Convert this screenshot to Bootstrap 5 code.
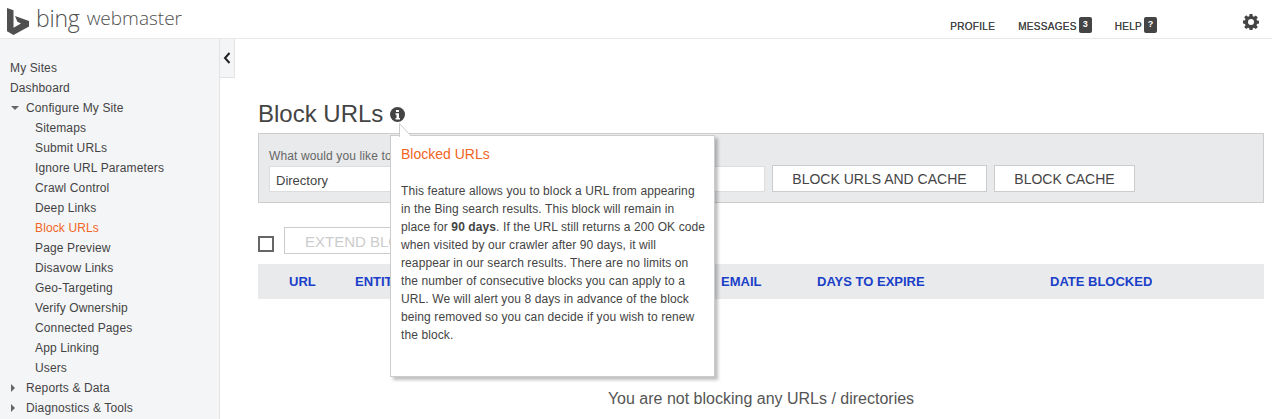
<!DOCTYPE html>
<html lang="en">
<head>
  <meta charset="UTF-8">
  <meta name="viewport" content="width=device-width, initial-scale=1.0">
  <title>Block URLs - Bing Webmaster</title>
  <link rel="stylesheet" href="https://cdn.jsdelivr.net/npm/bootstrap@5.3.0/dist/css/bootstrap.min.css">
  <style>
    html, body { height: 419px; overflow: hidden; }
    body { font-family: "Liberation Sans", Arial, sans-serif; font-size: 12px; color: #444; background: #fff; }
    .top-bar { height: 39px; border-bottom: 1px solid #e8e8e8; padding-left: 7px; }
    .logo-word { font-size: 23px; font-weight: 300; line-height: 36px; color: #505050; margin-left: 7px; font-family: "Open Sans", sans-serif; letter-spacing: -.2px; }
    .logo-word2 { font-size: 19px; font-weight: 300; line-height: 36px; color: #505050; margin-left: 7px; font-family: "Open Sans", sans-serif; }
    .top-links { margin-left: auto; padding-right: 13px; height: 38px; gap: 23px; }
    .top-link { font-size: 10px; color: #444; letter-spacing: .3px; margin-top: 17px; line-height: 20px; text-shadow: 0 0 .4px #444; }
    .count-tag { display: inline-block; width: 13px; height: 16px; background: #444; color: #fff; border-radius: 2px; font-size: 9px; font-weight: 700; line-height: 15px; text-align: center; letter-spacing: 0; margin-left: 2px; vertical-align: 3px; }
    .gear-icon { margin-left: 63px; margin-top: 14px; }
    .side-nav { width: 220px; height: 380px; background: #f4f5f7; border-right: 1px solid #e3e3e3; padding-top: 19px; flex: none; letter-spacing: .13px; }
    .side-nav div { line-height: 20px; height: 20px; padding-left: 10px; color: #444; white-space: nowrap; }
    .side-nav .grp { padding-left: 10px; display: flex; align-items: center; }
    .side-nav .sub { padding-left: 35px; }
    .side-nav .sub.on { color: #f26522; }
    .caret-down { width: 0; height: 0; border: 4px solid transparent; border-top: 4px solid #666; border-bottom: 0; margin-right: 7px; margin-left: 1px; }
    .caret-right { width: 0; height: 0; border: 4px solid transparent; border-left: 4px solid #666; border-right: 0; margin-right: 11px; margin-left: 1px; }
    .side-toggle { width: 15px; height: 39px; background: #f4f5f7; border-right: 1px solid #e3e3e3; border-bottom: 1px solid #e3e3e3; flex: none; }
    .content-area { flex: 1; padding: 61px 8px 0 23px; position: relative; min-width: 0; }
    .page-title { font-size: 24px; font-weight: 400; line-height: 28px; margin: 0 0 5px; color: #444; }
    .info-icon { margin-left: 7px; }
    .search-box { background: #e9eaec; border: 1px solid #ccc; height: 70px; padding: 14px 10px 0; }
    .search-box label { display: block; color: #666; line-height: 16px; margin-bottom: 1px; letter-spacing: .12px; }
    .input-line { gap: 7px; }
    .path-input { width: 496px; height: 26px; background: #fff; border: 1px solid #ddd; padding-left: 6px; line-height: 27px; font-size: 13px; color: #444; margin-top: 1px; }
    .plain-btn { background: #fff; border: 1px solid #ccc; border-radius: 0; height: 27px; font-size: 14px; color: #444; padding: 1px 0 0; line-height: 25px; text-align: center; }
    .btn-wide { width: 215px; }
    .btn-short { width: 141px; }
    .tick-row { margin-top: 24px; height: 27px; }
    .tick-box { width: 16px; height: 16px; border: 2px solid #666; background: #fff; margin-top: 9px; }
    .extend-btn { color: #ccc; border-color: #ccc; width: 250px; text-align: left; margin-left: 10px; font-size: 15px; padding-left: 20px; }
    .head-row { margin-top: 10px; height: 35px; background: #e9eaec; color: #1a3fc8; font-size: 13px; font-weight: 700; line-height: 35px; }
    .head-row span { flex: none; white-space: nowrap; overflow: hidden; }
    .empty-note { font-size: 16px; text-align: center; color: #555; margin-top: 90px; line-height: 20px; }
    .help-pop { position: absolute; left: 155px; top: 96px; width: 325px; height: 242px; background: #fff; border: 1px solid #ccc; box-shadow: 3px 3px 3px rgba(0,0,0,.25); padding: 9px 0 9px 10px; line-height: 18px; color: #444; letter-spacing: .1px; white-space: nowrap; }
    .help-pop h3 { font-size: 14px; font-weight: 400; color: #f26522; line-height: 18px; margin: 0 0 19px; letter-spacing: 0; }
    .help-pop p { margin: 0; }
    .pop-arrow { position: absolute; left: 8px; top: -13px; display: block; }
  </style>
</head>
<body>
  <header class="top-bar d-flex">
    <svg width="22" height="27" viewBox="0 0 22 27" class="mt-2 flex-none"><path d="M0 0l6.500 2.300v17.500l7.500-4.400-3.600-1.700-2.400-5.600L22 13v5.500L6.500 27 0 23.300z" fill="#505050"/></svg>
    <span class="logo-word">bing</span><span class="logo-word2">webmaster</span>
    <div class="top-links d-flex">
      <div class="top-link">PROFILE</div>
      <div class="top-link">MESSAGES<span class="count-tag">3</span></div>
      <div class="top-link">HELP<span class="count-tag">?</span></div>
      <svg class="gear-icon" width="16" height="16" viewBox="0 0 16 16"><path fill="#444" fill-rule="evenodd" d="M6.600 0h2.800l.4 2.200 1.200.5 1.800-1.300 2 2-1.300 1.800.5 1.200 2 .4v2.800l-2 .4-.5 1.200 1.300 1.800-2 2-1.800-1.300-1.200.5-.4 2.200H6.600l-.4-2.200-1.200-.5-1.800 1.300-2-2 1.300-1.800-.5-1.200-2-.4V6.600l2-.4.5-1.200-1.300-1.800 2-2L5 2.700l1.200-.5zM8 5a3 3 0 100 6 3 3 0 000-6z"/></svg>
    </div>
  </header>
  <div class="d-flex">
    <nav class="side-nav">
      <div>My Sites</div>
      <div>Dashboard</div>
      <div class="grp"><i class="caret-down"></i>Configure My Site</div>
      <div class="sub">Sitemaps</div>
      <div class="sub">Submit URLs</div>
      <div class="sub">Ignore URL Parameters</div>
      <div class="sub">Crawl Control</div>
      <div class="sub">Deep Links</div>
      <div class="sub on">Block URLs</div>
      <div class="sub">Page Preview</div>
      <div class="sub">Disavow Links</div>
      <div class="sub">Geo-Targeting</div>
      <div class="sub">Verify Ownership</div>
      <div class="sub">Connected Pages</div>
      <div class="sub">App Linking</div>
      <div class="sub">Users</div>
      <div class="grp"><i class="caret-right"></i>Reports &amp; Data</div>
      <div class="grp"><i class="caret-right"></i>Diagnostics &amp; Tools</div>
    </nav>
    <div class="side-toggle d-flex align-items-center justify-content-center">
      <svg width="8" height="12" viewBox="0 0 8 12"><path d="M6.500 1L2 6l4.500 5" fill="none" stroke="#222" stroke-width="2"/></svg>
    </div>
    <main class="content-area">
      <h1 class="page-title d-flex align-items-center">Block URLs
        <svg class="info-icon" width="15" height="15" viewBox="0 0 15 15"><circle cx="7.500" cy="7.500" r="7.500" fill="#444"/><path fill="#fff" d="M6 3h3v2H6zM5.500 6.200H9v4.800h1v1.500H5.500V11h1V7.700h-1z"/></svg>
      </h1>
      <section class="search-box">
        <label>What would you like to block?</label>
        <div class="input-line d-flex align-items-start">
          <div class="path-input">Directory</div>
          <button class="plain-btn btn-wide" type="button">BLOCK URLS AND CACHE</button>
          <button class="plain-btn btn-short" type="button">BLOCK CACHE</button>
        </div>
      </section>
      <div class="tick-row d-flex">
        <div class="tick-box"></div>
        <button class="plain-btn extend-btn" type="button">EXTEND BLOCK</button>
      </div>
      <div class="head-row d-flex">
        <span style="width:97px;padding-left:31px">URL</span>
        <span style="width:366px">ENTITY TYPE</span>
        <span style="width:96px">EMAIL</span>
        <span style="width:233px">DAYS TO EXPIRE</span>
        <span>DATE BLOCKED</span>
      </div>
      <p class="empty-note">You are not blocking any URLs / directories</p>
      <div class="help-pop">
        <svg class="pop-arrow" width="14" height="14" viewBox="0 0 14 14"><path d="M.5 14V.5L12 13" fill="#fff" stroke="#ccc"/><path d="M1 13h11v1H1z" fill="#fff"/></svg>
        <h3>Blocked URLs</h3>
        <p>This feature allows you to block a URL from appearing<br>in the Bing search results. This block will remain in<br>place for <b>90 days</b>. If the URL still returns a 200 OK code<br>when visited by our crawler after 90 days, it will<br>reappear in our search results. There are no limits on<br>the number of consecutive blocks you can apply to a<br>URL. We will alert you 8 days in advance of the block<br>being removed so you can decide if you wish to renew<br>the block.</p>
      </div>
    </main>
  </div>
  <script src="https://cdn.jsdelivr.net/npm/bootstrap@5.3.0/dist/js/bootstrap.bundle.min.js"></script>
</body>
</html>
